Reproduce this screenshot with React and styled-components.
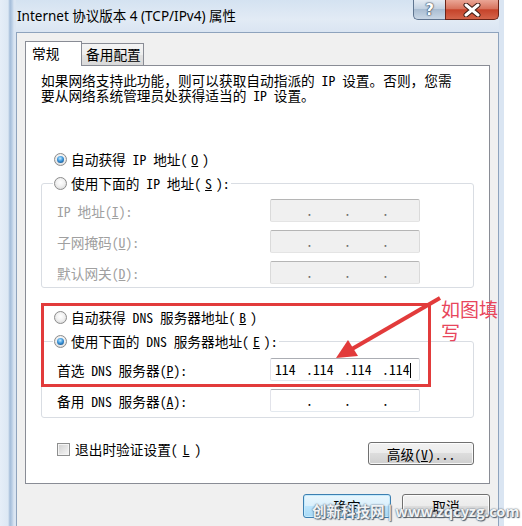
import React from "react";
import styled, { createGlobalStyle, css } from "styled-components";

const UI_FONT = `"Noto Sans Mono CJK SC", "Liberation Mono", "Noto Sans CJK SC", monospace`;

const GlobalStyle = createGlobalStyle`
  html, body {
    margin: 0;
    padding: 0;
    background: #ffffff;
  }
  body {
    width: 522px;
    height: 526px;
    overflow: hidden;
  }
`;

const Page = styled.div`
  position: relative;
  width: 522px;
  height: 526px;
  overflow: hidden;
  background: #ffffff;
  font-family: ${UI_FONT};
  font-size: 13.7px;
  color: #000;
`;

// 창 틀
const Window = styled.div`
  width: 504px;
  height: 526px;
  box-sizing: border-box;
  padding: 0 5px 0 16px;
  display: flex;
  flex-direction: column;
  background: linear-gradient(
    to right,
    #e6eef8 0,
    #dde8f4 8px,
    #a3bcd9 10px,
    #b9cde4 12px,
    #dae5f2 14px,
    #dae5f2 100%
  );
`;

const TitleBar = styled.div`
  height: 32px;
  display: flex;
  align-items: flex-start;
  background: linear-gradient(#d4e2f1, #e2ebf5 60%, #dae5f2);
`;

const TitleText = styled.div`
  margin-left: 1px;
  line-height: 32px;
  font-family: "Noto Sans", "Noto Sans CJK SC", sans-serif;
  font-size: 13.5px;
  color: #000;
  white-space: nowrap;
`;

const CaptionButtons = styled.div`
  margin-left: auto;
  display: flex;
`;

const HelpButton = styled.div`
  width: 32px;
  height: 20px;
  box-sizing: border-box;
  border: 1px solid #5f7590;
  border-top: none;
  border-right: none;
  border-radius: 0 0 0 5px;
  background: linear-gradient(#e4ebf3, #c3d2e2 45%, #a9bdd2 50%, #c9d7e6);
  display: flex;
  align-items: center;
  justify-content: center;
  font-family: "DejaVu Sans", sans-serif;
  font-weight: bold;
  font-size: 15px;
  color: #fff;
  text-shadow: 0 0 1px #33465c, 0 0 1px #33465c, 0 0 2px #33465c;
`;

const CloseButton = styled.div`
  width: 54px;
  height: 20px;
  box-sizing: border-box;
  border: 1px solid #6b2418;
  border-top: none;
  border-radius: 0 0 5px 0;
  background: linear-gradient(#eaa696, #d8745e 45%, #c6432a 52%, #d4644a);
  display: flex;
  align-items: center;
  justify-content: center;
`;

const Client = styled.div`
  flex: 1;
  background: #f0f0f0;
  border: 1px solid #8ea3bd;
  border-bottom: none;
  padding: 8px 8px 0 8px;
  display: flex;
  flex-direction: column;
`;

const TabStrip = styled.div`
  display: flex;
  align-items: flex-end;
  height: 24px;
`;

const Tab = styled.div`
  box-sizing: border-box;
  border: 1px solid #898c95;
  border-bottom: none;
  white-space: nowrap;
  line-height: 20px;
  ${(p) =>
    p.$active
      ? css`
          position: relative;
          z-index: 1;
          width: 57px;
          height: 25px;
          margin-bottom: -1px;
          padding: 1px 0 0 6px;
          background: #fff;
        `
      : css`
          width: 62px;
          height: 22px;
          border-left: none;
          padding: 0 0 0 4px;
          background: linear-gradient(#f4f4f4, #eeeeee 50%, #e3e3e3 50%, #d9d9d9);
        `}
`;

const Panel = styled.div`
  height: 419px;
  box-sizing: border-box;
  background: #fff;
  border: 1px solid #898c95;
  padding: 0 15px 0 15px;
  display: flex;
  flex-direction: column;
`;

const Description = styled.div`
  margin-top: 7px;
  line-height: 14.5px;
  white-space: nowrap;
`;

const OptionRow = styled.label`
  display: flex;
  align-items: center;
  gap: 4px;
  height: 16px;
  white-space: nowrap;
  margin-top: ${(p) => p.$top || 0}px;
  padding-left: ${(p) => (p.$inset ? 13 : 0)}px;
  color: ${(p) => (p.$disabled ? "#a0a0a0" : "#000")};
`;

const Radio = styled.span`
  width: 13px;
  height: 13px;
  flex: none;
  box-sizing: border-box;
  border-radius: 50%;
  border: 1px solid #8c8c8c;
  background: radial-gradient(circle at 50% 40%, #ffffff 0, #f1f1f1 45%, #d0d0d0 100%);
  display: inline-flex;
  align-items: center;
  justify-content: center;
  ${(p) =>
    p.$checked &&
    css`
      &::after {
        content: "";
        width: 7px;
        height: 7px;
        border-radius: 50%;
        background: radial-gradient(circle at 45% 35%, #c4ebff 0, #3d97dc 45%, #0d3b6e 100%);
      }
    `}
`;

const CheckBox = styled.span`
  width: 13px;
  height: 13px;
  flex: none;
  box-sizing: border-box;
  border: 1px solid #8e8f8f;
  box-shadow: inset 0 0 0 1px #f4f4f4;
  background: linear-gradient(135deg, #cfcfcf, #f7f7f7);
`;

const GroupBox = styled.fieldset`
  margin: ${(p) => p.$top || 0}px 0 0 0;
  padding: ${(p) => p.$padTop}px 0 ${(p) => p.$padBottom}px 0;
  min-width: 0;
  border: 1px solid #d9dde3;
  border-radius: 3px;
`;

const Legend = styled.legend`
  margin-left: 11px;
  padding: 0 1px;
  height: 16px;
`;

const FieldGrid = styled.div`
  margin-left: 15px;
  display: grid;
  grid-template-columns: 213px 150px;
  row-gap: 8px;
  align-items: center;
`;

const FieldLabel = styled.span`
  white-space: nowrap;
  color: ${(p) => (p.$disabled ? "#a0a0a0" : "#000")};
`;

const IpBox = styled.div`
  width: 150px;
  height: 23px;
  box-sizing: border-box;
  border: 1px solid;
  border-radius: 2px;
  padding-left: 4px;
  display: flex;
  align-items: center;
  line-height: 21px;
  ${(p) =>
    p.$disabled
      ? css`
          background: #f0f0f0;
          border-color: #b5b5b5 #dadada #e4e4e4 #dadada;
          color: #6d6d6d;
        `
      : css`
          background: #fff;
          border-color: #abadb3 #dbdfe6 #e3e9ef #e2e3ea;
          color: #000;
        `}
`;

const Octet = styled.span`
  width: 31px;
  flex: none;
  white-space: nowrap;
`;

const Dot = styled.span`
  width: 7px;
  flex: none;
  text-align: center;
`;

const Caret = styled.span`
  display: inline-block;
  width: 1px;
  height: 15px;
  background: #000;
  vertical-align: -3px;
`;

const BottomRow = styled.div`
  margin-top: 24px;
  display: flex;
  justify-content: space-between;
  align-items: flex-start;
`;

const CheckRow = styled.label`
  display: flex;
  align-items: center;
  gap: 5px;
  height: 14px;
  padding-left: 16px;
  white-space: nowrap;
`;

const Button = styled.div`
  width: ${(p) => p.$w}px;
  height: ${(p) => p.$h}px;
  box-sizing: border-box;
  border: 1px solid #707070;
  border-radius: 3px;
  display: flex;
  align-items: center;
  justify-content: center;
  white-space: nowrap;
  background: linear-gradient(#f2f2f2, #ebebeb 50%, #dddddd 50%, #cfcfcf);
  box-shadow: inset 0 0 0 1px rgba(255, 255, 255, 0.8);
  ${(p) =>
    p.$default &&
    css`
      border-color: #3c7fb1;
      background: linear-gradient(#eaf6fd, #d9f0fc 50%, #bee6fd 50%, #a7d9f5);
      box-shadow: inset 0 0 0 1px #c4eafc;
    `}
`;

const DialogButtons = styled.div`
  margin-top: 10px;
  display: flex;
  justify-content: flex-end;
  gap: 11px;
`;

// 빨간 주석 (스크린샷 위에 그려진 표시)
const AnnotationLayer = styled.svg`
  position: absolute;
  left: 0;
  top: 0;
  pointer-events: none;
`;

const AnnotationText = styled.div`
  position: absolute;
  left: 441px;
  top: 297px;
  width: 58px;
  font-family: "Noto Sans CJK SC", sans-serif;
  font-size: 19px;
  line-height: 23px;
  color: #e8465c;
`;

const Watermark = styled.div`
  position: absolute;
  left: 312px;
  top: 502px;
  white-space: nowrap;
  font-family: "Noto Sans CJK SC", "Liberation Sans", sans-serif;
  font-weight: bold;
  font-size: 14.5px;
  line-height: 18px;
  color: rgba(255, 255, 255, 0.92);
  text-shadow: 0 0 1px #6a7a8a, 0 0 2px #6a7a8a, 1px 1px 1px #4a5866;
`;

const Key = styled.u`
  text-underline-offset: 1px;
`;

const IpField = ({ disabled, values = ["", "", "", ""], caret }) => (
  <IpBox $disabled={disabled}>
    {values.map((v, i) => (
      <React.Fragment key={i}>
        <Octet>
          {v}
          {caret && i === 3 && <Caret />}
        </Octet>
        {i < 3 && <Dot>.</Dot>}
      </React.Fragment>
    ))}
  </IpBox>
);

const App = () => {
  return (
    <Page>
      <GlobalStyle />
      <Window>
        <TitleBar>
          <TitleText>Internet 协议版本 4 (TCP/IPv4) 属性</TitleText>
          <CaptionButtons>
            <HelpButton>?</HelpButton>
            <CloseButton>
              <svg width="18" height="14" viewBox="0 0 18 14">
                <path d="M3 2 L15 12 M15 2 L3 12" stroke="#3b1a14" strokeWidth="5" strokeLinecap="round" />
                <path d="M3 2 L15 12 M15 2 L3 12" stroke="#ffffff" strokeWidth="3" strokeLinecap="round" />
              </svg>
            </CloseButton>
          </CaptionButtons>
        </TitleBar>

        <Client>
          <TabStrip>
            <Tab $active>常规</Tab>
            <Tab>备用配置</Tab>
          </TabStrip>

          <Panel>
            <Description>
              如果网络支持此功能，则可以获取自动指派的 IP 设置。否则，您需
              <br />
              要从网络系统管理员处获得适当的 IP 设置。
            </Description>

            <OptionRow $top={49} $inset>
              <Radio $checked />
              自动获得 IP 地址(<Key>O</Key>)
            </OptionRow>

            <GroupBox $top={8} $padTop={8} $padBottom={3}>
              <Legend>
                <OptionRow>
                  <Radio />
                  使用下面的 IP 地址(<Key>S</Key>):
                </OptionRow>
              </Legend>
              <FieldGrid>
                <FieldLabel $disabled>
                  IP 地址(<Key>I</Key>):
                </FieldLabel>
                <IpField disabled />
                <FieldLabel $disabled>
                  子网掩码(<Key>U</Key>):
                </FieldLabel>
                <IpField disabled />
                <FieldLabel $disabled>
                  默认网关(<Key>D</Key>):
                </FieldLabel>
                <IpField disabled />
              </FieldGrid>
            </GroupBox>

            <OptionRow $top={21} $inset>
              <Radio />
              自动获得 DNS 服务器地址(<Key>B</Key>)
            </OptionRow>

            <GroupBox $top={8} $padTop={9} $padBottom={5}>
              <Legend>
                <OptionRow>
                  <Radio $checked />
                  使用下面的 DNS 服务器地址(<Key>E</Key>):
                </OptionRow>
              </Legend>
              <FieldGrid>
                <FieldLabel>
                  首选 DNS 服务器(<Key>P</Key>):
                </FieldLabel>
                <IpField values={["114", "114", "114", "114"]} caret />
                <FieldLabel>
                  备用 DNS 服务器(<Key>A</Key>):
                </FieldLabel>
                <IpField />
              </FieldGrid>
            </GroupBox>

            <BottomRow>
              <CheckRow>
                <CheckBox />
                退出时验证设置(<Key>L</Key>)
              </CheckRow>
              <Button $w={106} $h={23}>
                高级(<Key>V</Key>)...
              </Button>
            </BottomRow>
          </Panel>

          <DialogButtons>
            <Button $w={88} $h={24} $default>
              确定
            </Button>
            <Button $w={88} $h={24}>
              取消
            </Button>
          </DialogButtons>
        </Client>
      </Window>

      <AnnotationLayer width="522" height="526" viewBox="0 0 522 526">
        <rect x="42.5" y="304.5" width="387" height="81" fill="none" stroke="#e23b3b" strokeWidth="3" />
        <line x1="440" y1="298" x2="352" y2="349" stroke="#e23b3b" strokeWidth="4" />
        <polygon points="336,358 358,356 348,340" fill="#e23b3b" />
      </AnnotationLayer>
      <AnnotationText>如图填写</AnnotationText>

      <Watermark>创新科技网 | www.zqcyzg.com</Watermark>
    </Page>
  );
};

export default App;
